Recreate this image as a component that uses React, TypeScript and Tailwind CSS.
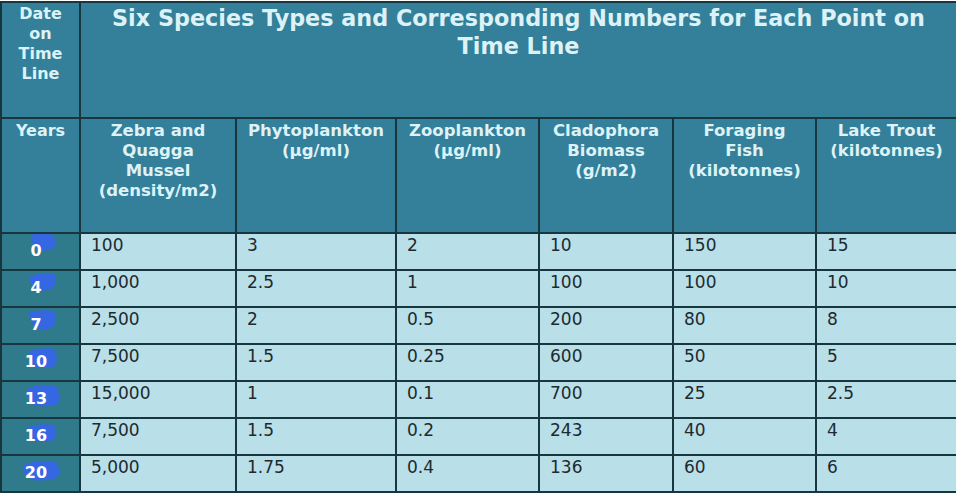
import React from "react";

const rows: { y: string; cells: string[]; blob: string }[] = [
  { y: "0", cells: ["100", "3", "2", "10", "150", "15"], blob: "M29 1 Q41 -2 51 1 Q56 7 52 14 Q45 18 36 16 Q29 12 29 1 Z" },
  { y: "4", cells: ["1,000", "2.5", "1", "100", "100", "10"], blob: "M28 5 Q40 1 52 3 Q56 9 51 17 Q44 21 35 19 Q27 14 28 5 Z" },
  { y: "7", cells: ["2,500", "2", "0.5", "200", "80", "8"], blob: "M28 4 Q40 1 52 3 Q56 10 51 19 Q43 23 34 20 Q27 13 28 4 Z" },
  { y: "10", cells: ["7,500", "1.5", "0.25", "600", "50", "5"], blob: "M27 6 Q40 2 52 4 Q57 12 53 21 Q44 25 33 22 Q26 15 27 6 Z" },
  { y: "13", cells: ["15,000", "1", "0.1", "700", "25", "2.5"], blob: "M25 6 Q41 1 54 4 Q59 13 56 22 Q45 26 32 23 Q24 16 25 6 Z" },
  { y: "16", cells: ["7,500", "1.5", "0.2", "243", "40", "4"], blob: "M27 7 Q40 4 52 6 Q56 12 52 21 Q43 24 34 22 Q27 16 27 7 Z" },
  { y: "20", cells: ["5,000", "1.75", "0.4", "136", "60", "6"], blob: "M21 9 Q36 3 53 6 Q60 14 56 21 Q45 26 31 24 Q20 19 21 9 Z" },
];

const heads = [
  ["Zebra and", "Quagga", "Mussel", "(density/m2)"],
  ["Phytoplankton", "(µg/ml)"],
  ["Zooplankton", "(µg/ml)"],
  ["Cladophora", "Biomass", "(g/m2)"],
  ["Foraging", "Fish", "(kilotonnes)"],
  ["Lake Trout", "(kilotonnes)"],
];

export default function App() {
  return (
    <div
      className="w-[956px] h-[496px] bg-white pt-px overflow-hidden"
      style={{ fontFamily: '"DejaVu Sans", Verdana, sans-serif' }}
    >
      <div className="grid grid-cols-[77px_154px_158px_141px_132px_141px_139px] grid-rows-[114px_113px_repeat(7,35px)] gap-[2px] bg-[#18363e] pl-[2px] py-[2px]">
        <div className="bg-[#34809a] text-[#dcf2f6] font-bold text-[16px] leading-[20px] text-center pt-px">
          Date
          <br />
          on
          <br />
          Time
          <br />
          Line
        </div>
        <div className="col-span-6 bg-[#34809a] text-[#dcf2f6] font-bold text-[22.3px] leading-[28px] text-center pt-px">
          Six Species Types and Corresponding Numbers for Each Point on
          <br />
          Time Line
        </div>
        <div className="bg-[#34809a] text-[#dcf2f6] font-bold text-[16px] leading-[20px] text-center pt-[2px]">
          Years
        </div>
        {heads.map((h, i) => (
          <div
            key={i}
            className="bg-[#34809a] text-[#dcf2f6] font-bold text-[16.5px] leading-[20px] text-center pt-[2px]"
          >
            {h.map((l, j) => (
              <div key={j}>{l}</div>
            ))}
          </div>
        ))}
        {rows.map((r) => (
          <React.Fragment key={r.y}>
            <div className="relative bg-[#2f7a8b]">
              <svg className="absolute left-0 top-0" width="77" height="35" viewBox="0 0 77 35">
                <path d={r.blob} fill="#3567e3" />
              </svg>
              <div className="relative flex justify-center pr-[9px] pt-[7px] text-white font-bold text-[16px] leading-[20px]">
                {r.y}
              </div>
            </div>
            {r.cells.map((c, j) => (
              <div
                key={j}
                className="bg-[#b9dfe9] text-[#1d2a2e] text-[17px] leading-[20px] pl-[10px] pt-[1px]"
              >
                {c}
              </div>
            ))}
          </React.Fragment>
        ))}
      </div>
    </div>
  );
}
